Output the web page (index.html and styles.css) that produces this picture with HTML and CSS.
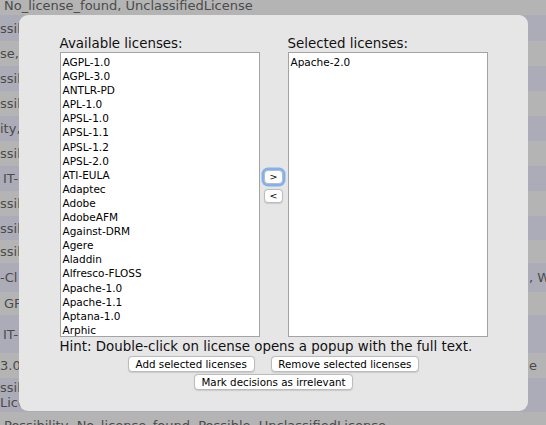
FILE: index.html
```html
<!DOCTYPE html>
<html>
<head>
<meta charset="utf-8">
<link rel="stylesheet" href="styles.css">
</head>
<body>
<div class="bg">
  <div class="row g first"><span class="l pad4">No_license_found, UnclassifiedLicense</span><span class="r"></span></div>
  <div class="row b h26"><span class="l">ssil</span><span class="r"></span></div>
  <div class="row g h25"><span class="l">se,</span><span class="r"></span></div>
  <div class="row b h25"><span class="l">ssil</span><span class="r"></span></div>
  <div class="row g h25"><span class="l">ssil</span><span class="r"></span></div>
  <div class="row b h25"><span class="l">ity,</span><span class="r"></span></div>
  <div class="row g h25"><span class="l">ssil</span><span class="r"></span></div>
  <div class="row b h25"><span class="l pad3">IT-</span><span class="r"></span></div>
  <div class="row g h25"><span class="l">ssil</span><span class="r"></span></div>
  <div class="row b h24"><span class="l">ssil</span><span class="r"></span></div>
  <div class="row g h23"><span class="l">ssil</span><span class="r"></span></div>
  <div class="row b h29"><span class="l">-Cl</span><span class="r">, W</span></div>
  <div class="row g h23"><span class="l pad4">GF</span><span class="r"></span></div>
  <div class="row b h38"><span class="l pad3">IT-</span><span class="r"></span></div>
  <div class="row g h25"><span class="l">3.0,</span><span class="r">e</span></div>
  <div class="row b h34"><span class="l two">ssil<br>Lice.</span><span class="r"></span></div>
  <div class="row g h25 last"><span class="l pad4">Possibility, No_license_found, Possible, UnclassifiedLicense</span><span class="r"></span></div>
</div>

<div class="dialog">
  <div class="picker">
    <div class="col">
      <div class="label">Available licenses:</div>
      <div class="list">
        <div class="item">AGPL-1.0</div>
        <div class="item">AGPL-3.0</div>
        <div class="item">ANTLR-PD</div>
        <div class="item">APL-1.0</div>
        <div class="item">APSL-1.0</div>
        <div class="item">APSL-1.1</div>
        <div class="item">APSL-1.2</div>
        <div class="item">APSL-2.0</div>
        <div class="item">ATI-EULA</div>
        <div class="item">Adaptec</div>
        <div class="item">Adobe</div>
        <div class="item">AdobeAFM</div>
        <div class="item">Against-DRM</div>
        <div class="item">Agere</div>
        <div class="item">Aladdin</div>
        <div class="item">Alfresco-FLOSS</div>
        <div class="item">Apache-1.0</div>
        <div class="item">Apache-1.1</div>
        <div class="item">Aptana-1.0</div>
        <div class="item">Arphic</div>
      </div>
    </div>
    <div class="mid">
      <button class="btn arrow focus">&gt;</button>
      <button class="btn arrow">&lt;</button>
    </div>
    <div class="col">
      <div class="label">Selected licenses:</div>
      <div class="list">
        <div class="item">Apache-2.0</div>
      </div>
    </div>
  </div>
  <div class="hint">Hint: Double-click on license opens a popup with the full text.</div>
  <div class="actions">
    <button class="btn">Add selected licenses</button>
    <button class="btn">Remove selected licenses</button>
  </div>
  <div class="actions">
    <button class="btn">Mark decisions as irrelevant</button>
  </div>
</div>
</body>
</html>
```

FILE: styles.css
```css
* { box-sizing: border-box; }
html, body { margin: 0; height: 100%; overflow: hidden; }
body {
  font-family: "DejaVu Sans", Verdana, sans-serif;
  background: #b4b4b4;
  position: relative;
}

.bg { display: flex; flex-direction: column; }
.row {
  display: grid;
  grid-template-columns: 527px 1fr;
  align-items: center;
  white-space: nowrap;
  overflow: hidden;
  font-size: 13px;
  line-height: 15px;
  color: #4b4b4b;
}
.row.g { background: #b4b4b4; }
.row.b { background: #acacb9; }
.row .l { overflow: hidden; }
.row .r { padding-left: 2px; overflow: hidden; }
.row .pad4 { padding-left: 4px; }
.row .pad3 { padding-left: 3px; }
.row.first { height: 15px; align-items: end; padding-bottom: 2px; }
.row.last { align-items: start; padding-top: 6px; }
.h23 { height: 23px; }
.h24 { height: 24px; }
.h25 { height: 25px; }
.h26 { height: 26px; }
.h29 { height: 29px; }
.h34 { height: 34px; }
.h38 { height: 38px; }

.dialog {
  position: absolute;
  left: 19px;
  top: 15px;
  width: 509px;
  height: 396px;
  background: #e6e6e6;
  border-radius: 9px;
  padding-top: 21px;
  display: flex;
  flex-direction: column;
  align-items: center;
}
.picker { display: flex; width: 428px; }
.col { width: 200px; display: flex; flex-direction: column; }
.label {
  font-size: 13.4px;
  line-height: 16px;
  height: 16px;
  color: #111;
  white-space: nowrap;
}
.list {
  height: 285px;
  background: #fff;
  border: 1px solid #a3a3a3;
  padding: 2px 2px;
  font-size: 10.5px;
  line-height: 14.1px;
  color: #000;
  overflow: hidden;
}
.item { white-space: nowrap; }
.mid {
  width: 28px;
  display: flex;
  flex-direction: column;
  justify-content: center;
  align-items: center;
  gap: 5px;
}
.hint {
  width: 428px;
  font-size: 13.4px;
  line-height: 15px;
  margin-top: 2px;
  color: #111;
  white-space: nowrap;
}
.actions { display: flex; gap: 16px; margin-top: 2px; }
.btn {
  font-family: "DejaVu Sans", Verdana, sans-serif;
  font-size: 10.3px;
  height: 16px;
  padding: 0 6.75px;
  background: #fff;
  border: 1px solid #bcbcbc;
  border-radius: 4px;
  color: #000;
  line-height: 14px;
  box-shadow: 0 0.5px 1px rgba(0, 0, 0, 0.12);
  white-space: nowrap;
}
.arrow {
  width: 19px;
  height: 14px;
  padding: 0;
  font-size: 9.5px;
  line-height: 12px;
}
.arrow.focus {
  box-shadow: 0 0 0 2.5px rgba(110, 168, 240, 0.85);
}
```
